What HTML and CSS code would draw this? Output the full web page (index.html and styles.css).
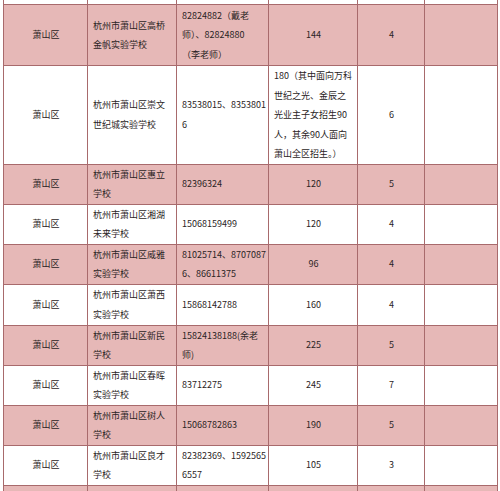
FILE: index.html
```html
<!DOCTYPE html>
<html lang="zh">
<head>
<meta charset="utf-8">
<link rel="stylesheet" href="styles.css">
</head>
<body>
<div class="wrap">
<table class="grid">
<colgroup>
<col class="c1"><col class="c2"><col class="c3"><col class="c4"><col class="c5"><col class="c6">
</colgroup>
<tbody>
<tr class="cut"><td></td><td></td><td></td><td></td><td></td><td></td></tr>
<tr class="pink h61">
<td class="ctr">萧山区</td>
<td class="lft">杭州市萧山区高桥<br>金帆实验学校</td>
<td class="lft">82824882（戴老<br>师）、82824880<br>（李老师）</td>
<td class="ctr">144</td>
<td class="ctr">4</td>
<td></td>
</tr>
<tr class="h98">
<td class="ctr">萧山区</td>
<td class="lft">杭州市萧山区崇文<br>世纪城实验学校</td>
<td class="lft">83538015、8353801<br>6</td>
<td class="lft note">180（其中面向万科<br>世纪之光、金辰之<br>光业主子女招生90<br>人，其余90人面向<br>萧山全区招生。）</td>
<td class="ctr">6</td>
<td></td>
</tr>
<tr class="pink h40">
<td class="ctr">萧山区</td>
<td class="lft">杭州市萧山区惠立<br>学校</td>
<td class="lft">82396324</td>
<td class="ctr">120</td>
<td class="ctr">5</td>
<td></td>
</tr>
<tr class="h40">
<td class="ctr">萧山区</td>
<td class="lft">杭州市萧山区湘湖<br>未来学校</td>
<td class="lft">15068159499</td>
<td class="ctr">120</td>
<td class="ctr">4</td>
<td></td>
</tr>
<tr class="pink h40">
<td class="ctr">萧山区</td>
<td class="lft">杭州市萧山区威雅<br>实验学校</td>
<td class="lft">81025714、8707087<br>6、86611375</td>
<td class="ctr">96</td>
<td class="ctr">4</td>
<td></td>
</tr>
<tr class="h41">
<td class="ctr">萧山区</td>
<td class="lft">杭州市萧山区萧西<br>实验学校</td>
<td class="lft">15868142788</td>
<td class="ctr">160</td>
<td class="ctr">4</td>
<td></td>
</tr>
<tr class="pink h40">
<td class="ctr">萧山区</td>
<td class="lft">杭州市萧山区新民<br>学校</td>
<td class="lft">15824138188(余老<br>师)</td>
<td class="ctr">225</td>
<td class="ctr">5</td>
<td></td>
</tr>
<tr class="h40">
<td class="ctr">萧山区</td>
<td class="lft">杭州市萧山区春晖<br>实验学校</td>
<td class="lft">83712275</td>
<td class="ctr">245</td>
<td class="ctr">7</td>
<td></td>
</tr>
<tr class="pink h40">
<td class="ctr">萧山区</td>
<td class="lft">杭州市萧山区树人<br>学校</td>
<td class="lft">15068782863</td>
<td class="ctr">190</td>
<td class="ctr">5</td>
<td></td>
</tr>
<tr class="h40">
<td class="ctr">萧山区</td>
<td class="lft">杭州市萧山区良才<br>学校</td>
<td class="lft">82382369、1592565<br>6557</td>
<td class="ctr">105</td>
<td class="ctr">3</td>
<td></td>
</tr>
<tr class="pink h40">
<td></td><td></td><td></td><td></td><td></td><td></td>
</tr>
</tbody>
</table>
</div>
</body>
</html>
```

FILE: styles.css
```css
html, body {
  margin: 0;
  padding: 0;
  background: #ffffff;
}
body {
  width: 500px;
  height: 491px;
  overflow: hidden;
  font-family: "Noto Sans CJK SC", "Noto Sans", sans-serif;
  color: #2a2424;
}
.wrap {
  padding-left: 3px;
}
.grid {
  border-collapse: collapse;
  table-layout: fixed;
  width: 494px;
  font-size: 9px;
  line-height: 19.5px;
}
.c1 { width: 84px; }
.c2 { width: 89px; }
.c3 { width: 92px; }
.c4 { width: 89px; }
.c5 { width: 67px; }
.c6 { width: 73px; }
.grid td {
  border: 1px solid #a86a6c;
  padding: 0 4px 0 5px;
  vertical-align: middle;
  white-space: nowrap;
  overflow: hidden;
}
.grid .cut td {
  border-top: none;
  height: 4px;
  padding: 0;
  line-height: 0;
}
.pink td {
  background: #e6b8b7;
}
.h61 td { height: 60px; }
.h98 td { height: 97px; }
.h40 td { height: 39px; }
.h41 td { height: 40px; }
.ctr { text-align: center; }
.lft { text-align: left; }
.note { padding-left: 8px; }
```
